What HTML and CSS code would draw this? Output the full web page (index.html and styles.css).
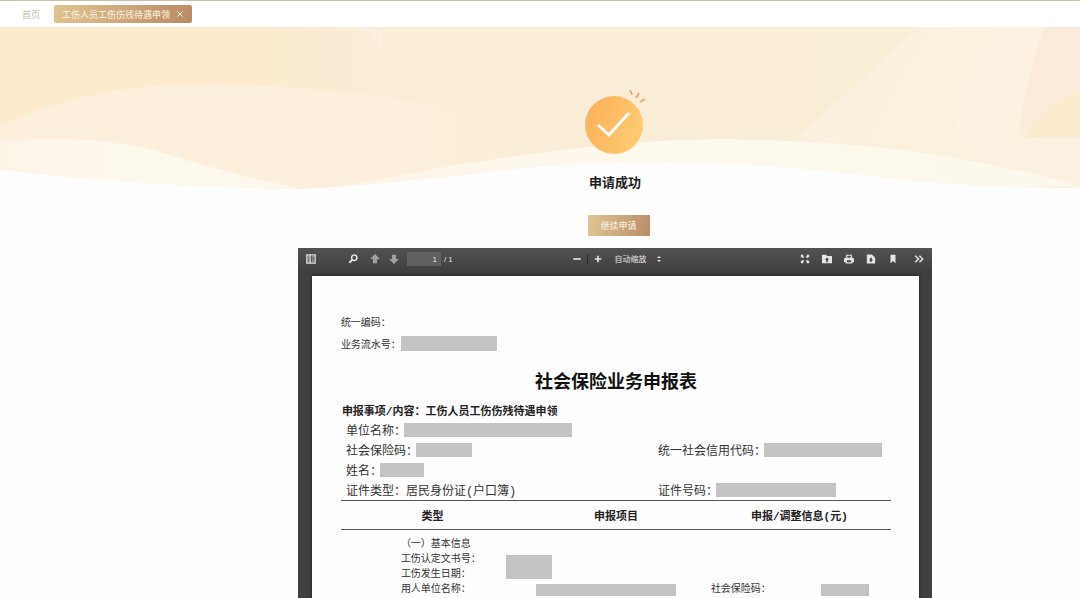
FILE: index.html
```html
<!DOCTYPE html>
<html lang="zh-CN">
<head>
    <meta charset="UTF-8">
    <meta name="viewport" content="width=device-width, initial-scale=1.0">
    <title>工伤人员工伤伤残待遇申领</title>
    <link rel="stylesheet" href="styles.css">
</head>
<body>
    <nav class="tabs">
        <a class="tab" href="#home">首页</a>
        <a class="tab active" href="#apply">工伤人员工伤伤残待遇申领
            <svg class="close" viewBox="0 0 8 8"><path d="M1.5 1.5l5 5M6.5 1.5l-5 5"/></svg>
        </a>
    </nav>

    <main class="content">
        <!-- Wave banner -->
        <svg class="waves" viewBox="0 0 1080 165" preserveAspectRatio="none">
            <defs>
                <linearGradient id="sky">
                    <stop offset="0" stop-color="#fdebcc"/>
                    <stop offset="0.24" stop-color="#fcebce"/>
                    <stop offset="0.34" stop-color="#f9edd7"/>
                    <stop offset="1" stop-color="#f8edd5"/>
                </linearGradient>
                <linearGradient id="hill">
                    <stop offset="0" stop-color="#fcf0dd"/>
                    <stop offset="0.6" stop-color="#fcf0dd"/>
                    <stop offset="1" stop-color="#fbeed7" stop-opacity="0"/>
                </linearGradient>
                <linearGradient id="foam">
                    <stop offset="0" stop-color="#fdf4e8"/>
                    <stop offset="0.4" stop-color="#fef9ed"/>
                    <stop offset="1" stop-color="#fdf8ec"/>
                </linearGradient>
                <linearGradient id="ray" x1="0" y1="0" x2="1" y2="0.3">
                    <stop offset="0" stop-color="#fbefdc"/>
                    <stop offset="1" stop-color="#fcf0e0"/>
                </linearGradient>
            </defs>
            <rect width="1080" height="165" fill="url(#sky)"/>
            <path d="M358 0Q372 8 382 24L384 4z" fill="#fbf0e0"/>
            <path d="M915 0Q860 55 790 115L840 165H1080V0z" fill="url(#ray)"/>
            <path d="M990 0Q960 50 952 125H1010L1045 0z" fill="#fdf1e1"/>
            <path d="M1045 0Q1022 60 1020 110L1080 60V0z" fill="#fcebd8"/>
            <path d="M1080 62Q1045 82 1024 110H1080z" fill="#fcebcd"/>
            <path d="M0 98Q90 57 200 57T440 78Q540 95 620 113L400 165H0z" fill="url(#hill)"/>
            <path d="M0 114Q100 106 170 128T300 161L0 160z" fill="url(#foam)"/>
            <path d="M340 160Q560 114 720 112Q860 114 950 130T1080 160z" fill="url(#foam)"/>
            <path d="M0 143Q140 160 300 162Q380 158 480 146T640 136Q750 134 860 148T1080 161V165H0z" fill="#fdfdfd"/>
        </svg>

        <section class="result">
            <svg class="result-icon" viewBox="0 0 62 66">
                <defs>
                    <linearGradient id="coin" x1="0" y1="0.2" x2="1" y2="0.6">
                        <stop offset="0" stop-color="#fdb057"/>
                        <stop offset="1" stop-color="#fdcb72"/>
                    </linearGradient>
                </defs>
                <circle cx="30" cy="36" r="29" fill="url(#coin)"/>
                <path d="M14 36l11 10 20-22" fill="none" stroke="#fff" stroke-width="3"/>
                <path d="M46 1l2 5M55 4l-3 5M61 10l-5 3" fill="none" stroke="#e0ac78" stroke-width="2"/>
            </svg>
            <h1>申请成功</h1>
            <button class="again" type="button">继续申请</button>
        </section>

        <section class="viewer">
            <div class="toolbar">
                <div class="group">
                    <button type="button" class="tool sidebar" aria-label="切换侧栏"><svg viewBox="0 0 12 12"><path d="M1 1h10v10H1zM5 1v10" fill="none" stroke="#e4e4e4" stroke-width="1.500"/><path d="M2 3.500h2M2 6h2M2 8.500h2M7 3.500h3M7 6h2M7 8.500h3" stroke="#e4e4e4"/></svg></button>
                    <button type="button" class="tool" aria-label="查找"><svg viewBox="0 0 12 12"><circle cx="7.500" cy="4.500" r="3.200" fill="none" stroke="#e4e4e4" stroke-width="1.800"/><path d="M5 7L1.500 10.500" stroke="#e4e4e4" stroke-width="2.400"/></svg></button>
                    <button type="button" class="tool dim previous" aria-label="上一页"><svg viewBox="0 0 12 12"><path d="M6 0l6 6H8.500v5h-5V6H0z"/></svg></button>
                    <button type="button" class="tool dim" aria-label="下一页"><svg viewBox="0 0 12 12"><path d="M6 12l6-6H8.500V1h-5v5H0z"/></svg></button>
                    <input class="page-number" type="text" value="1" aria-label="页码">
                    <span class="page-total">/ 1</span>
                </div>
                <div class="group zoom">
                    <button type="button" class="tool" aria-label="缩小"><svg viewBox="0 0 12 12"><path d="M1.500 5h9v2h-9z"/></svg></button>
                    <span class="divider"></span>
                    <button type="button" class="tool" aria-label="放大"><svg viewBox="0 0 12 12"><path d="M5 2h2v3h3v2H7v3H5V7H2V5h3z"/></svg></button>
                    <div class="scale">
                        <select aria-label="缩放">
                            <option>自动缩放</option>
                        </select>
                        <svg viewBox="0 0 6 8"><path d="M3 1l2 2H1zM3 7l2-2H1z"/></svg>
                    </div>
                </div>
                <div class="group right">
                    <button type="button" class="tool" aria-label="全屏"><svg viewBox="0 0 12 12"><path d="M1 1h3.500L3.500 2l1.500 1.500L3.500 5 2 3.500l-1 1zM11 1H7.500l1 1L7 3.500 8.500 5 10 3.500l1 1zM1 11h3.500l-1-1L5 8.500 3.500 7 2 8.500l-1-1zM11 11H7.500l1-1L7 8.500 8.500 7 10 8.500l1-1z"/></svg></button>
                    <button type="button" class="tool" aria-label="打开"><svg viewBox="0 0 12 12"><path d="M0 1h5l1 1.500h6V11H0z"/><path d="M6 4.200l2.500 2.600H7V10H5V6.800H3.500z" fill="#484848"/></svg></button>
                    <button type="button" class="tool" aria-label="打印"><svg viewBox="0 0 12 12"><path d="M2.500 1h7v3.500H11L12 6v4h-2v1.500H2V10H0V6l1-1.500h1.500z"/><path d="M4 2.200h4v2.300H4zM3.500 7.500h5V10h-5z" fill="#484848"/></svg></button>
                    <button type="button" class="tool" aria-label="下载"><svg viewBox="0 0 12 12"><path d="M1 0.500h6l4 4v7H1z"/><path d="M5 4.500h2V7h1.500L6 9.800 3.500 7H5z" fill="#484848"/></svg></button>
                    <button type="button" class="tool" aria-label="书签"><svg viewBox="0 0 12 12"><path d="M3 1h6v10L6 8.500 3 11z"/></svg></button>
                    <button type="button" class="tool more" aria-label="工具"><svg viewBox="0 0 12 12"><path d="M1.500 2l4 4-4 4M6.500 2l4 4-4 4" fill="none" stroke="#e4e4e4" stroke-width="1.800"/></svg></button>
                </div>
            </div>

            <article class="sheet">
                <div class="code-row">统一编码：</div>
                <div class="code-row">业务流水号：<span class="mask w96"></span></div>
                <h2>社会保险业务申报表</h2>
                <h3>申报事项/内容：工伤人员工伤伤残待遇申领</h3>
                <div class="info">
                    <div class="wide">单位名称：<span class="mask w168"></span></div>
                    <div>社会保险码：<span class="mask w56"></span></div>
                    <div>统一社会信用代码：<span class="mask w118"></span></div>
                    <div class="wide">姓名：<span class="mask w44"></span></div>
                    <div>证件类型：居民身份证(户口簿)</div>
                    <div>证件号码：<span class="mask w120"></span></div>
                </div>
                <table>
                    <thead>
                        <tr><th>类型</th><th>申报项目</th><th>申报/调整信息(元)</th></tr>
                    </thead>
                    <tbody>
                        <tr>
                            <td colspan="3">
                                <div class="detail">
                                    <div class="full">（一）基本信息</div>
                                    <div>工伤认定文书号：</div>
                                    <span class="mask tall"></span>
                                    <div class="first">工伤发生日期：</div>
                                </div>
                                <div class="detail-line">
                                    <span class="name">用人单位名称：</span>
                                    <span class="mask w140"></span>
                                    <span class="code">社会保险码：</span>
                                    <span class="mask w48"></span>
                                </div>
                            </td>
                        </tr>
                    </tbody>
                </table>
            </article>
        </section>
    </main>
</body>
</html>
```
FILE: styles.css
```css
* {
    box-sizing: border-box;
}
body {
    margin: 0;
    height: 100vh;
    display: flex;
    flex-direction: column;
    overflow: hidden;
    background: #fdfdfd;
    color: #333;
    font-family: "Liberation Sans", "Noto Sans CJK SC", sans-serif;
}
button, input, select {
    font-family: inherit;
    margin: 0;
    padding: 0;
    border: none;
}
svg {
    display: block;
}

/* Tabs */
.tabs {
    display: flex;
    align-items: center;
    gap: 6px;
    height: 27px;
    flex: none;
    padding-left: 14px;
    border-top: 1px solid #c6c1a6;
    background: #fff;
}
.tab {
    display: flex;
    align-items: center;
    gap: 6px;
    height: 18px;
    padding: 0 8px;
    border-radius: 2px;
    color: #c4b9a2;
    font-size: 9px;
    text-decoration: none;
}
.tab.active {
    background: linear-gradient(100deg, #dfc48f, #ba8b66);
    color: #fff5e2;
}
.close {
    width: 8px;
    height: 8px;
    fill: none;
    stroke: #fff5e2;
}

/* Result */
.content {
    position: relative;
    flex: 1;
    min-height: 0;
    display: flex;
    flex-direction: column;
    align-items: center;
    padding-left: 150px;
}
.waves {
    position: absolute;
    top: 0;
    left: 0;
    width: 100%;
    height: 165px;
}
.result {
    position: relative;
    flex: none;
    display: flex;
    flex-direction: column;
    align-items: center;
    padding: 62px 0 12px;
}
.result-icon {
    width: 62px;
    height: 66px;
}
h1 {
    margin: 18px 0 22px;
    color: #1c1c1c;
    font-size: 13px;
    line-height: 20px;
}
.again {
    width: 62px;
    height: 21px;
    margin-left: 7px;
    border-radius: 1px;
    background: linear-gradient(100deg, #dfc692, #ba8c68);
    color: #fff5e6;
    font-size: 9px;
}

/* Document viewer */
.viewer {
    position: relative;
    flex: 1;
    min-height: 0;
    width: 68.2%;
    padding: 0 13px 0 14px;
    overflow: hidden;
    background: #404040;
}
.toolbar {
    display: flex;
    align-items: center;
    justify-content: space-between;
    height: 28px;
    margin: 0 -13px 0 -14px;
    padding: 0 7px 6px;
    background: linear-gradient(#525252, #3c3c3c);
    color: #e4e4e4;
    font-size: 8px;
}
.group {
    display: flex;
    align-items: center;
    gap: 7px;
}
.tool {
    display: flex;
    align-items: center;
    justify-content: center;
    width: 12px;
    height: 16px;
    background: none;
}
.tool svg {
    width: 10px;
    height: 10px;
    fill: #e4e4e4;
}
.tool.dim svg {
    fill: #a0a0a0;
}
.tool.sidebar {
    margin-right: 23px;
}
.tool.previous {
    margin-left: 3px;
}
.page-number {
    width: 34px;
    height: 14px;
    padding-right: 4px;
    background: #606060;
    color: #e4e4e4;
    font-size: 8px;
    text-align: right;
}
.page-total {
    margin-left: -4px;
}
.zoom {
    gap: 4px;
    margin-right: 18px;
}
.divider {
    width: 1px;
    height: 10px;
    background: #2c2c2c;
}
.scale {
    display: flex;
    align-items: center;
    margin-left: 6px;
}
.scale select {
    width: 42px;
    appearance: none;
    background: none;
    color: #e4e4e4;
    font-size: 8px;
}
.scale svg {
    width: 6px;
    height: 8px;
    fill: #e4e4e4;
}
.right {
    gap: 10px;
}
.more {
    margin-left: 4px;
}

/* Declaration form */
.sheet {
    min-height: 100%;
    padding: 34px 28px 0 29px;
    background: #fdfdfd;
    box-shadow: 0 0 3px #1c1c1c;
    font-family: "Liberation Mono", "Noto Sans CJK SC", monospace;
}
.mask {
    display: block;
    flex: none;
    height: 15px;
    background: #c3c3c3;
}
.code-row {
    display: flex;
    align-items: center;
    height: 22px;
    font-size: 10px;
}
h2 {
    margin: 16px 0 9px;
    color: #111;
    font-size: 18px;
    line-height: 26px;
    text-align: center;
}
h3 {
    margin: 0;
    padding-left: 1px;
    color: #222;
    font-size: 11px;
    line-height: 15px;
}
.info {
    display: grid;
    grid-template-columns: 312px 1fr;
    padding-left: 5px;
    font-size: 12px;
}
.info div {
    display: flex;
    align-items: center;
    height: 20px;
    white-space: nowrap;
}
.info .wide {
    grid-column: 1 / 3;
}
.info .mask {
    height: 14px;
    margin-left: -2px;
}
.w44 { width: 44px; }
.w48 { width: 48px; }
.w56 { width: 56px; }
.w96 { width: 96px; }
.w118 { width: 118px; }
.w120 { width: 120px; }
.w140 { width: 140px; }
.w168 { width: 168px; }
table {
    width: 100%;
    table-layout: fixed;
    border-collapse: collapse;
}
th {
    height: 29px;
    padding: 0;
    border-top: 1px solid #555;
    border-bottom: 1px solid #555;
    color: #222;
    font-size: 11px;
}
td {
    padding: 7px 0 0 60px;
    font-size: 10px;
    line-height: 15px;
    white-space: nowrap;
}
.detail {
    display: grid;
    grid-template-columns: 105px 46px;
}
.detail .full {
    grid-column: 1 / 3;
}
.detail .first {
    grid-column: 1;
}
.detail .tall {
    grid-row: 2 / 4;
    grid-column: 2;
    align-self: center;
    height: 24px;
}
.detail-line {
    display: flex;
    align-items: center;
}
.detail-line .mask {
    height: 12px;
}
.name {
    width: 135px;
}
.code {
    width: 110px;
    margin-left: 35px;
}
```
